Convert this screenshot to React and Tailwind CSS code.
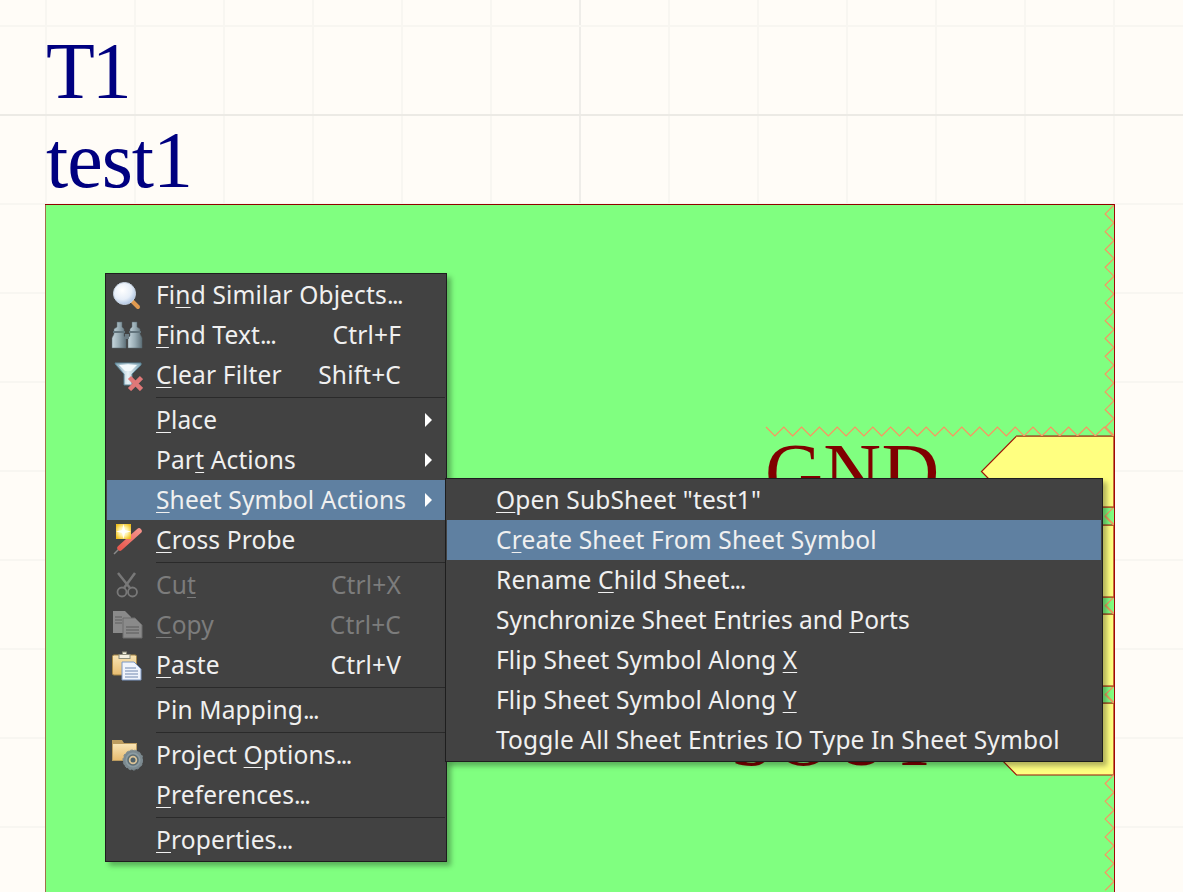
import React from "react";

const F = 17.8;
const H = F / 2;

function zigTop() {
  const p = [];
  for (let i = 0; i * H + 766 <= 1114.5; i++) p.push(`${(766 + i * H).toFixed(1)},${i % 2 ? 436 : 427}`);
  return p.join(" ");
}
function zigRight(y0, y1) {
  const p = [];
  let i = 0;
  for (let y = y0; y <= y1 + 0.1; y += H) {
    p.push(`${i % 2 ? 1105.1 : 1114},${y.toFixed(1)}`);
    i++;
  }
  return p.join(" ");
}

function Canvas() {
  const vs = [46, 135, 224, 313, 402, 491, 580, 669, 758, 847, 936, 1025, 1114];
  const hs = [26, 115, 204, 293, 382, 471, 560, 649, 738, 827];
  const ports = [
    [436, 507],
    [525, 597],
    [614, 686],
    [703, 775],
  ];
  return (
    <svg className="absolute inset-0" width="1183" height="892" shapeRendering="crispEdges">
      {vs.map((x) => (
        <line key={x} x1={x} x2={x} y1="0" y2="892" strokeWidth="2" stroke={x === 580 ? "#efede9" : "#f8f6f1"} />
      ))}
      {hs.map((y) => (
        <line key={y} x1="0" x2="1183" y1={y} y2={y} strokeWidth="2" stroke={y === 115 ? "#ecEae5" : "#f8f6f1"} />
      ))}
      <rect x="45" y="204" width="1070" height="700" fill="#80ff80" />
      <line x1="45.5" x2="45.5" y1="204" y2="892" stroke="#a0704a" />
      {ports.map(([a, b]) => (
        <polygon
          key={a}
          points={`1114,${a} 1016.5,${a} 981.5,${(a + b) / 2} 1016.5,${b} 1114,${b}`}
          fill="#ffff80"
          stroke="#a01408"
          strokeWidth="1.2"
          shapeRendering="auto"
        />
      ))}
      <g shapeRendering="auto" fill="none" stroke="#ff9060" strokeWidth="1.1">
        <polyline points={zigTop()} />
        <polyline points={zigRight(205, 436)} />
        <polyline points={zigRight(507, 525)} />
        <polyline points={zigRight(597, 614)} />
        <polyline points={zigRight(686, 703)} />
        <polyline points={zigRight(774.6, 892)} />
        <line x1="1105" y1="427" x2="1114" y2="436" strokeWidth="2" stroke="#e8a060" />
        <line x1="1105" y1="516" x2="1114" y2="525" strokeWidth="2" stroke="#e8a060" />
        <line x1="1105" y1="605" x2="1114" y2="614" strokeWidth="2" stroke="#e8a060" />
        <line x1="1105" y1="694" x2="1114" y2="703" strokeWidth="2" stroke="#e8a060" />
      </g>
      {ports.slice(0, 3).map(([a, b]) => (
        <g key={"l" + a}>
          <line x1="1016" x2="1114" y1={a + 0.5} y2={a + 0.5} stroke="#b0652c" />
          <line x1="1016" x2="1114" y1={b + 0.5} y2={b + 0.5} stroke="#b0652c" />
        </g>
      ))}
      <line x1="1016" x2="1114" y1="703.5" y2="703.5" stroke="#b0652c" />
      <line x1="45" x2="1115" y1="204.5" y2="204.5" stroke="#900000" />
      <line x1="1114.5" x2="1114.5" y1="204" y2="892" stroke="#a00808" />
    </svg>
  );
}

function Defs() {
  return (
    <svg width="0" height="0" className="absolute">
      <defs>
        <radialGradient id="lens" cx="0.4" cy="0.35" r="0.7">
          <stop offset="0" stopColor="#ffffff" />
          <stop offset="0.6" stopColor="#e6eef8" />
          <stop offset="1" stopColor="#a8c0e0" />
        </radialGradient>
        <linearGradient id="bino" x1="0" x2="1" y1="0" y2="0">
          <stop offset="0" stopColor="#c8d8de" />
          <stop offset="0.5" stopColor="#98acb4" />
          <stop offset="1" stopColor="#5e7078" />
        </linearGradient>
        <linearGradient id="funnel" x1="0" x2="1" y1="0" y2="0">
          <stop offset="0" stopColor="#7fa4b4" />
          <stop offset="0.5" stopColor="#e8f2f6" />
          <stop offset="1" stopColor="#7fa4b4" />
        </linearGradient>
        <linearGradient id="probe" x1="0" x2="1" y1="1" y2="0">
          <stop offset="0" stopColor="#e85a50" />
          <stop offset="1" stopColor="#f49088" />
        </linearGradient>
        <radialGradient id="star" cx="0.5" cy="0.5" r="0.6">
          <stop offset="0" stopColor="#ffffff" />
          <stop offset="0.5" stopColor="#fff0a0" />
          <stop offset="1" stopColor="#f0c020" />
        </radialGradient>
        <linearGradient id="folder" x1="0" x2="0" y1="0" y2="1">
          <stop offset="0" stopColor="#f8e4b4" />
          <stop offset="1" stopColor="#e8bc70" />
        </linearGradient>
      </defs>
    </svg>
  );
}

const Magnifier = () => (
  <svg width="32" height="32" viewBox="0 0 32 32">
    <path d="M20 21 L27 28" stroke="#e09a50" strokeWidth="4" strokeLinecap="round" />
    <circle cx="13.500" cy="14.500" r="11" fill="url(#lens)" stroke="#c8d4e2" strokeWidth="1" />
  </svg>
);
const Binoculars = () => (
  <svg width="32" height="32" viewBox="0 0 32 32">
    <path d="M6 3 h5 v5 l2 2 v7 l2 2 v10 h-14 v-10 l2 -4 v-5 l3 -2z" fill="url(#bino)" stroke="#5a6a72" strokeWidth="0.5" />
    <path d="M21 3 h5 v5 l3 2 v5 l2 4 v10 h-14 v-10 l2 -2 v-7 l2 -2z" fill="url(#bino)" stroke="#5a6a72" strokeWidth="0.5" />
    <rect x="14" y="15" width="4" height="5" fill="#6c7c84" />
    <rect x="2" y="12" width="12" height="2" fill="#62747c" />
    <rect x="18" y="12" width="12" height="2" fill="#62747c" />
  </svg>
);
const Funnel = () => (
  <svg width="32" height="32" viewBox="0 0 32 32">
    <path d="M4 4 H30 V6 L21 15 V26 H13 V15 L5 6 Z" fill="url(#funnel)" stroke="#5c8496" strokeWidth="1" />
    <path d="M8 6 H26 L20 12 H14 Z" fill="#f4fafc" />
    <path d="M18.500 18.500 L30.500 30.500 M30.500 18.500 L18.500 30.500" stroke="#e07878" strokeWidth="4.500" />
  </svg>
);
const CrossProbe = () => (
  <svg width="32" height="32" viewBox="0 0 32 32">
    <path d="M3 30 L10 23" stroke="#8a8a8a" strokeWidth="1.500" />
    <path d="M9 24 L28 7" stroke="url(#probe)" strokeWidth="5.500" strokeLinecap="round" />
    <rect x="5" y="0" width="15" height="15" fill="url(#star)" />
    <path d="M12.500 0 L14 6 L20 7.500 L14 9 L12.500 15 L11 9 L5 7.500 L11 6 Z" fill="#ffffff" opacity="0.9" />
  </svg>
);
const Scissors = () => (
  <svg width="32" height="32" viewBox="0 0 32 32" fill="none" stroke="#787878">
    <path d="M7 4 L19 19 M24 4 L13 19" strokeWidth="2.500" />
    <circle cx="11" cy="23" r="4.500" strokeWidth="1.800" />
    <circle cx="21.500" cy="23" r="4.500" strokeWidth="1.800" />
  </svg>
);
const CopyIcon = () => (
  <svg width="32" height="32" viewBox="0 0 32 32">
    <path d="M2 2 H14 L20 8 V24 H2 Z" fill="#8a8a8a" />
    <path d="M12 9 H24 L31 16 V29 H12 Z" fill="#8a8a8a" stroke="#6c6c6c" />
    <path d="M15 18 H28 M15 21 H28 M15 24 H28" stroke="#5a5a5a" />
    <path d="M4 8 H11 M4 11 H11 M4 14 H11" stroke="#5e5e5e" />
  </svg>
);
const PasteIcon = () => (
  <svg width="32" height="32" viewBox="0 0 32 32">
    <rect x="1.500" y="6" width="24" height="20" rx="1.500" fill="url(#folder)" stroke="#a88848" />
    <rect x="8" y="5.500" width="11" height="4" fill="#f4f0e0" stroke="#8c8c7a" />
    <rect x="11.500" y="3" width="4" height="2.500" fill="#f4f0e0" stroke="#8c8c7a" />
    <path d="M11 13 H23 L30 20 V31 H11 Z" fill="#f0f4fc" stroke="#7c98c4" />
    <path d="M14 19 H25 M14 22 H27 M14 25 H27 M14 28 H27" stroke="#7088b0" />
  </svg>
);
const FolderGear = () => (
  <svg width="32" height="32" viewBox="0 0 32 32">
    <path d="M1 1 H11 L13 4 H26 V22 H1 Z" fill="#bc9c60" />
    <rect x="2" y="5" width="23" height="16" fill="url(#folder)" />
    <circle cx="22" cy="21" r="10" fill="#7c8a90" strokeDasharray="2.500 1.900" stroke="#7c8a90" strokeWidth="1" />
    <circle cx="22" cy="21" r="7.500" fill="#8c9ca2" />
    <circle cx="22" cy="21" r="5" fill="#dcc498" stroke="#5c6c72" strokeWidth="1.500" />
    <circle cx="22" cy="21" r="2.500" fill="#50626a" />
  </svg>
);
const Arrow = () => <span className="absolute right-[13px] top-[13px] h-0 w-0 border-y-[7px] border-l-[7px] border-y-transparent border-l-white" />;

function Row({ icon, children, shortcut, arrow, active, disabled }) {
  return (
    <div className={"relative flex h-10 items-center whitespace-nowrap pl-[49px] pt-px " + (active ? "bg-[#5f80a1] " : "") + (disabled ? "text-[#7c7c7c]" : "text-[#f0f0f0]")}>
      {icon && <span className="absolute left-[4px] top-[4px] block h-8 w-8">{icon}</span>}
      <span>{children}</span>
      {shortcut && <span className="ml-auto pr-[44px]">{shortcut}</span>}
      {arrow && <Arrow />}
    </div>
  );
}

const Sep = () => (
  <div className="flex h-[5px] items-center pl-[49px]">
    <div className="h-px w-full bg-[#2a2a2a]" />
  </div>
);
const U = ({ children }) => <u className="underline decoration-1 underline-offset-[3px]">{children}</u>;
const D = () => <span className="tracking-[-1.5px]">...</span>;

function SubMenu() {
  return (
    <div className="absolute left-[338px] top-[-2px] w-[658px] border border-[#1e1e1e] bg-[#424242] p-px shadow-[4px_4px_5px_rgba(0,0,0,0.3)]">
      <Row><U>O</U>pen SubSheet "test1"</Row>
      <Row active>C<U>r</U>eate Sheet From Sheet Symbol</Row>
      <Row>Rename <U>C</U>hild Sheet<D /></Row>
      <Row><span className="tracking-[0px]">Synchronize Sheet Entries and <U>P</U>orts</span></Row>
      <Row>Flip Sheet Symbol Along <U>X</U></Row>
      <Row>Flip Sheet Symbol Along <U>Y</U></Row>
      <Row>Toggle All Sheet Entries IO Type In Sheet Symbol</Row>
    </div>
  );
}

function Menu() {
  return (
    <div className="absolute left-[105px] top-[273px] w-[342px] border border-[#1e1e1e] bg-[#424242] p-px font-['Noto_Sans',sans-serif] text-[24.5px] tracking-[0.15px] shadow-[4px_4px_5px_rgba(0,0,0,0.3)]">
      <Row icon={<Magnifier />}>Fi<U>n</U>d Similar Objects<D /></Row>
      <Row icon={<Binoculars />} shortcut="Ctrl+F"><U>F</U>ind Text<D /></Row>
      <Row icon={<Funnel />} shortcut="Shift+C"><U>C</U>lear Filter</Row>
      <Sep />
      <Row arrow><U>P</U>lace</Row>
      <Row arrow>Par<U>t</U> Actions</Row>
      <div className="relative">
        <Row arrow active><U>S</U>heet Symbol Actions</Row>
        <SubMenu />
      </div>
      <Row icon={<CrossProbe />}><U>C</U>ross Probe</Row>
      <Sep />
      <Row icon={<Scissors />} shortcut="Ctrl+X" disabled>Cu<U>t</U></Row>
      <Row icon={<CopyIcon />} shortcut="Ctrl+C" disabled><U>C</U>opy</Row>
      <Row icon={<PasteIcon />} shortcut="Ctrl+V"><U>P</U>aste</Row>
      <Sep />
      <Row>Pin Mapping<D /></Row>
      <Sep />
      <Row icon={<FolderGear />}>Project <U>O</U>ptions<D /></Row>
      <Row><U>P</U>references<D /></Row>
      <Sep />
      <Row><U>P</U>roperties<D /></Row>
    </div>
  );
}

export default function App() {
  return (
    <div className="relative h-[892px] w-[1183px] overflow-hidden bg-[#fffcf7] font-['Liberation_Serif',serif]">
      <Defs />
      <Canvas />
      <div className="absolute left-[46px] top-[25px] text-[80px] leading-[92px] tracking-[-3px] text-[#000080]">T1</div>
      <div className="absolute left-[46px] top-[114px] text-[80px] leading-[92px] tracking-[-1px] text-[#000080]">test1</div>
      <div className="absolute left-[765px] top-[426px] text-[80px] leading-[92px] tracking-[0.5px] text-[#800000]">GND</div>
      <div className="absolute left-[730px] top-[692px] text-[80px] leading-[92px] text-[#800000]">SOUT</div>
      <Menu />
    </div>
  );
}
